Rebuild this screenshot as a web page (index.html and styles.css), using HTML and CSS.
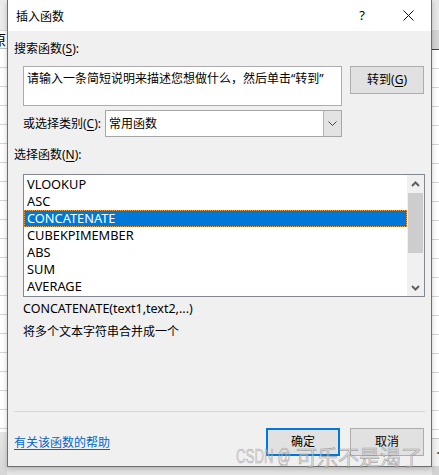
FILE: index.html
```html
<!DOCTYPE html>
<html lang="zh-CN">
<head>
<meta charset="utf-8">
<title>插入函数</title>
<link rel="stylesheet" href="styles.css">
</head>
<body>
<div class="screen">
  <div class="sheet sheet-left">
    <div class="s-top"></div>
    <div class="s-head"><span class="cut">原</span></div>
    <div class="s-grid"></div>
    <div class="s-bottom"></div>
  </div>

  <div class="dialog">
    <div class="titlebar">
      <span class="title">插入函数</span>
      <span class="cap cap-help">?</span>
      <span class="cap cap-close">
        <svg width="11" height="11" viewBox="0 0 11 11"><path d="M0.5 0.5 L10.5 10.5 M10.5 0.5 L0.5 10.5" stroke="#111" stroke-width="1" fill="none"/></svg>
      </span>
    </div>

    <div class="body">
      <div class="label">搜索函数(<u>S</u>):</div>
      <div class="search-row">
        <div class="search-box">请输入一条简短说明来描述您想做什么，然后单击“转到”</div>
        <div class="btn">转到(<u>G</u>)</div>
      </div>

      <div class="cat-row">
        <span class="cat-label">或选择类别(<u>C</u>):</span>
        <div class="select">
          <span class="select-text">常用函数</span>
          <span class="select-arrow">
            <svg width="9" height="5" viewBox="0 0 9 5"><path d="M0.5 0.5 L4.5 4.5 L8.5 0.5" stroke="#444" stroke-width="1" fill="none"/></svg>
          </span>
        </div>
      </div>

      <div class="label label-fn">选择函数(<u>N</u>):</div>
      <div class="listbox">
        <div class="items">
          <div class="item">VLOOKUP</div>
          <div class="item">ASC</div>
          <div class="item selected">CONCATENATE</div>
          <div class="item">CUBEKPIMEMBER</div>
          <div class="item">ABS</div>
          <div class="item">SUM</div>
          <div class="item">AVERAGE</div>
        </div>
        <div class="scrollbar">
          <div class="sb-arrow">
            <svg width="9" height="6" viewBox="0 0 9 6"><path d="M1 5 L4.5 1.5 L8 5" stroke="#606060" stroke-width="2" fill="none"/></svg>
          </div>
          <div class="sb-thumb"></div>
          <div class="sb-track"></div>
          <div class="sb-arrow">
            <svg width="9" height="6" viewBox="0 0 9 6"><path d="M1 1 L4.5 4.5 L8 1" stroke="#606060" stroke-width="2" fill="none"/></svg>
          </div>
        </div>
      </div>

      <div class="syntax">CONCATENATE(text1,text2,...)</div>
      <div class="desc">将多个文本字符串合并成一个</div>

      <div class="footer">
        <div class="sep"></div>
        <div class="foot-row">
          <a class="help-link" href="#">有关该函数的帮助</a>
          <div class="btns">
            <div class="btn btn-default">确定</div>
            <div class="btn">取消</div>
          </div>
        </div>
      </div>
    </div>

    <div class="watermark"><span class="wm-latin">CSDN @</span>可乐不是渴了</div>
  </div>

  <div class="sheet sheet-right">
    <div class="r-top"></div>
    <div class="r-head"></div>
    <div class="r-grid"></div>
    <div class="r-tabs"><span class="tab-arrow">◄</span></div>
    <div class="r-bottom"></div>
  </div>
</div>
</body>
</html>
```

FILE: styles.css
```css
* { box-sizing: border-box; }

body {
  margin: 0;
  width: 439px;
  height: 475px;
  overflow: hidden;
  font-family: "Noto Sans", "Noto Sans CJK SC", sans-serif;
  font-size: 12px;
  color: #000;
  background: #e4e4e4;
}

.screen {
  display: flex;
  height: 475px;
}

/* spreadsheet strips behind the dialog */
.sheet {
  width: 7px;
  flex: none;
  display: flex;
  flex-direction: column;
  overflow: hidden;
}

.s-top { height: 30px; background: #ebebeb; }
.s-head {
  height: 19px;
  background: #fff;
  border-top: 1px solid #d6d6d6;
  border-bottom: 1px solid #c0c0c0;
  overflow: hidden;
  font-family: "Noto Sans CJK SC", sans-serif;
  font-size: 14px;
  line-height: 17px;
}
.cut { display: block; margin-left: -8px; }
.s-grid {
  flex: 1;
  background: repeating-linear-gradient(to bottom, #fff 0 18px, #d5d5d5 18px 19px);
}
.s-bottom {
  height: 43px;
  background: linear-gradient(to bottom, #e6e6e6, #d6d6d6);
}

.r-top { height: 30px; background: #e6e6e6; }
.r-head {
  height: 20px;
  background: #d3d3d3;
  border-bottom: 1px solid #404040;
}
.r-grid {
  flex: 1;
  background: repeating-linear-gradient(to bottom, #fff 0 18px, #d5d5d5 18px 19px);
}
.r-tabs {
  height: 28px;
  background: #f2f2f2;
  border-top: 1px solid #c4c4c4;
  display: flex;
  align-items: center;
}
.tab-arrow {
  font-size: 8px;
  color: #333;
  margin-left: 4px;
  font-family: "DejaVu Sans", sans-serif;
}
.r-bottom { height: 9px; background: #d2d2d2; }

/* dialog */
.dialog {
  position: relative;
  z-index: 1;
  width: 425px;
  height: 467px;
  flex: none;
  display: flex;
  flex-direction: column;
  background: #f0f0f0;
  border: 1px solid #6e6e6e;
  border-top: none;
  box-shadow: 0 2px 5px rgba(0, 0, 0, 0.22);
}

.titlebar {
  height: 31px;
  flex: none;
  display: flex;
  align-items: center;
  background: #fff;
}
.title {
  flex: 1;
  padding-left: 8px;
  font-family: "Noto Sans CJK SC", sans-serif;
  font-size: 12px;
  line-height: 16px;
}
.cap {
  width: 46px;
  height: 31px;
  display: flex;
  align-items: center;
  justify-content: center;
}
.cap-help {
  font-size: 13px;
  padding-bottom: 1px;
}

.body {
  flex: 1;
  display: flex;
  flex-direction: column;
  padding: 10px 7px 10px 6px;
}

.label, .cat-label, .search-box, .select-text, .btn, .desc, .help-link {
  font-family: "Noto Sans", "Noto Sans CJK SC", sans-serif;
  font-size: 12px;
  line-height: 16px;
}
u { text-decoration-thickness: 1px; text-underline-offset: 2px; }

.search-row {
  display: flex;
  gap: 8px;
  margin-top: 9px;
  margin-left: 9px;
}
.search-box {
  width: 319px;
  height: 40px;
  background: #fff;
  border: 1px solid #acacac;
  padding: 4px 3px;
}

.btn {
  width: 74px;
  height: 28px;
  flex: none;
  display: flex;
  align-items: center;
  justify-content: center;
  background: #e1e1e1;
  border: 1px solid #adadad;
}
.btn-default {
  border: 2px solid #0078d7;
}

.cat-row {
  display: flex;
  align-items: center;
  justify-content: space-between;
  width: 319px;
  margin-top: 4px;
  margin-left: 9px;
}
.select {
  width: 237px;
  height: 27px;
  display: flex;
  background: #fff;
  border: 1px solid #a6a6a6;
}
.select-text {
  flex: 1;
  padding-left: 3px;
  display: flex;
  align-items: center;
}
.select-arrow {
  width: 18px;
  display: flex;
  align-items: center;
  justify-content: center;
  background: #e3e3e3;
  border-left: 1px solid #b4b4b4;
}

.label-fn { margin-top: 10px; }

.listbox {
  display: flex;
  width: 402px;
  height: 123px;
  margin-top: 11px;
  margin-left: 9px;
  background: #fff;
  border: 1px solid #828790;
}
.items {
  flex: 1;
  padding-top: 1px;
}
.item {
  height: 17px;
  line-height: 17px;
  padding-left: 3px;
  font-family: "Noto Sans", sans-serif;
  font-size: 12.8px;
}
.item.selected {
  background: #0078d7;
  color: #fff;
  outline: 1px dotted #e6a14a;
  outline-offset: -1px;
}

.scrollbar {
  width: 17px;
  flex: none;
  display: flex;
  flex-direction: column;
  background: #f0f0f0;
}
.sb-arrow {
  height: 17px;
  display: flex;
  align-items: center;
  justify-content: center;
}
.sb-thumb {
  height: 60px;
  margin: 1px 1px 0 1px;
  background: #cdcdcd;
}
.sb-track { flex: 1; }

.syntax {
  margin-top: 4px;
  margin-left: 9px;
  font-family: "Noto Sans", sans-serif;
  font-size: 12.5px;
  line-height: 16px;
}
.desc {
  margin-top: 7px;
  margin-left: 9px;
}

.footer {
  margin-top: auto;
}
.sep {
  height: 1px;
  background: #d7d7d7;
  margin-right: -1px;
}
.foot-row {
  display: flex;
  align-items: center;
  justify-content: space-between;
  margin-top: 16px;
}
.help-link {
  color: #0066cc;
  text-decoration: underline;
  text-underline-offset: 2px;
  margin-top: 2px;
}
.btns {
  display: flex;
  gap: 10px;
}

.watermark {
  position: absolute;
  left: 228px;
  top: 444px;
  display: flex;
  align-items: center;
  font-family: "Noto Sans CJK SC", sans-serif;
  font-size: 21px;
  line-height: 24px;
  color: rgba(215, 215, 215, 0.55);
  -webkit-text-stroke: 0.6px rgba(120, 120, 120, 0.6);
  white-space: nowrap;
  pointer-events: none;
}
.wm-latin {
  display: inline-block;
  width: 60px;
  font-family: "Liberation Sans", sans-serif;
  transform: scaleX(0.63);
  transform-origin: left center;
}
```
